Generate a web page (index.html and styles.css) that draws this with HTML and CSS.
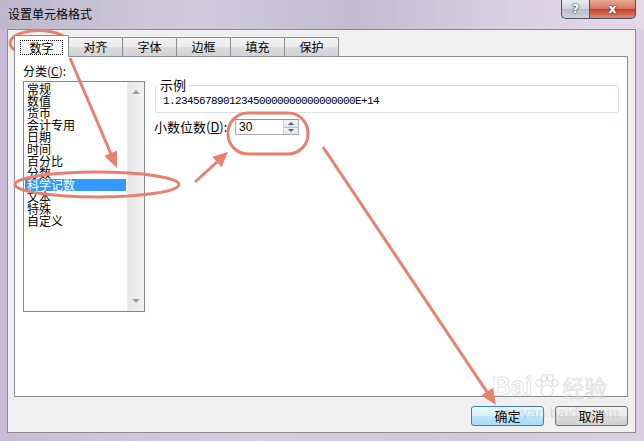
FILE: index.html
```html
<!DOCTYPE html>
<html lang="zh-CN">
  <head>
    <meta charset="UTF-8" />
    <title>设置单元格格式</title>
    <link rel="stylesheet" href="styles.css">
  </head>
  <body>
    <div class="window">
      <div class="titlebar">
        <span class="title">设置单元格格式</span>
        <div class="caption-buttons">
          <div class="cap-btn help">?</div>
          <div class="cap-btn close">x</div>
        </div>
      </div>

      <div class="client">
        <div class="tabs">
          <div class="tab active"><span class="focus">数字</span></div>
          <div class="tab">对齐</div>
          <div class="tab">字体</div>
          <div class="tab">边框</div>
          <div class="tab">填充</div>
          <div class="tab">保护</div>
        </div>

        <div class="panel">
          <div class="category">
            <div class="label">分类(<u>C</u>):</div>
            <div class="listbox">
              <ul class="items">
                <li>常规</li>
                <li>数值</li>
                <li>货币</li>
                <li>会计专用</li>
                <li>日期</li>
                <li>时间</li>
                <li>百分比</li>
                <li>分数</li>
                <li class="selected">科学记数</li>
                <li>文本</li>
                <li>特殊</li>
                <li>自定义</li>
              </ul>
              <div class="scrollbar">
                <span class="arrow up"></span>
                <span class="arrow down"></span>
              </div>
            </div>
          </div>

          <div class="detail">
            <fieldset class="sample">
              <legend>示例</legend>
              <div class="sample-value">1.234567890123450000000000000000E+14</div>
            </fieldset>
            <div class="decimals">
              <span class="label">小数位数(<u>D</u>):</span>
              <div class="spinbox">
                <span class="spin-value">30</span>
                <div class="spin-buttons">
                  <span class="spin up"></span>
                  <span class="spin down"></span>
                </div>
              </div>
            </div>
          </div>
        </div>

        <div class="actions">
          <div class="button primary">确定</div>
          <div class="button">取消</div>
        </div>
      </div>

      <div class="watermark">
        <div class="wm-logo">
          <span class="wm-bai">Bai</span>
          <svg class="wm-paw" width="26" height="24" viewBox="0 0 26 24">
            <ellipse cx="5" cy="9" rx="3" ry="3.5" />
            <ellipse cx="10" cy="4" rx="3" ry="3.5" />
            <ellipse cx="16" cy="4" rx="3" ry="3.5" />
            <ellipse cx="21" cy="9" rx="3" ry="3.5" />
            <path d="M13 11 C7 11 5 20 9 21 C11 22 15 22 17 21 C21 20 19 11 13 11 Z" />
          </svg>
          <span class="wm-cn">经验</span>
        </div>
        <div class="wm-url">jingyan.baidu.com</div>
      </div>

      <svg class="marks" width="644" height="441" viewBox="0 0 644 441">
        <ellipse cx="39" cy="43" rx="29" ry="12.5" />
        <ellipse cx="97" cy="184.5" rx="82" ry="12.5" />
        <rect x="228" y="113" width="80" height="41" rx="20" />
        <line x1="70" y1="58" x2="111" y2="154" />
        <polygon class="head" points="117,168 117.1,150.6 104.3,156.1" />
        <line x1="195" y1="182" x2="217" y2="162" />
        <polygon class="head" points="228,152 221.6,167.2 212.2,156.8" />
        <line x1="323" y1="147" x2="487" y2="392" />
        <polygon class="head" points="496,405 492.9,387.8 481.3,395.6" />
      </svg>
    </div>
  </body>
</html>
```

FILE: styles.css
```css
* {
  margin: 0;
  padding: 0;
  box-sizing: border-box;
}
body {
  width: 644px;
  height: 441px;
  overflow: hidden;
  font: 12px/14px "Noto Sans CJK SC", sans-serif;
  color: #000;
}
.window {
  position: relative;
  width: 644px;
  height: 441px;
  display: flex;
  flex-direction: column;
  background: linear-gradient(90deg, #c9bcd8 0, #d6cde2 40%, #d2c8de 70%, #dccfe2 100%);
}

/* title bar */
.titlebar {
  height: 29px;
  display: flex;
  align-items: flex-start;
  background: linear-gradient(90deg, #bdb8cc 0, #d2cbde 30%, #c2bcd2 55%, #d9d2e3 80%, #e2d8e8 100%);
}
.title {
  padding: 7px 0 0 8px;
  font-size: 12px;
}
.caption-buttons {
  display: flex;
  margin-left: auto;
  margin-right: 8px;
}
.cap-btn {
  height: 19px;
  border: 1px solid #4a5366;
  border-top: none;
  color: #fff;
  font: bold 13px/18px "DejaVu Sans", sans-serif;
  text-align: center;
  text-shadow: 0 0 2px #333, 0 0 1px #222;
}
.help {
  width: 28px;
  border-radius: 0 0 0 5px;
  border-right: none;
  background: linear-gradient(#e9ebf0, #cdd2dc 50%, #b3bac8 51%, #cfd4dd);
}
.close {
  width: 47px;
  border-radius: 0 0 5px 0;
  background: linear-gradient(#e8a898, #d8735f 50%, #c4412b 51%, #d98a72);
}

/* client area */
.client {
  flex: 1;
  display: flex;
  flex-direction: column;
  margin: 0 8px 8px 7px;
  padding: 0 7px 0 6px;
  background: #f0f0f0;
  border: 1px solid #8b8b8b;
}
.tabs {
  position: relative;
  z-index: 1;
  display: flex;
  align-items: flex-end;
  height: 26px;
}
.tab {
  width: 55px;
  height: 19px;
  margin-left: -1px;
  border: 1px solid #898c95;
  border-bottom: none;
  border-radius: 2px 2px 0 0;
  text-align: center;
  line-height: 17px;
  background: linear-gradient(#f3f3f3, #ebebeb 50%, #dcdcdc 51%, #d2d2d2);
}
.tab:first-child {
  margin-left: 0;
}
.tab.active {
  height: 22px;
  margin-bottom: -1px;
  padding-top: 3px;
  background: #fff;
}
.focus {
  display: inline-block;
  padding: 0 8px;
  line-height: 13px;
  outline: 1px dotted #000;
}

.panel {
  height: 341px;
  display: flex;
  gap: 10px;
  padding: 7px 8px 0 8px;
  background: #fff;
  border: 1px solid #898c95;
}
.category {
  width: 122px;
}
.label {
  white-space: nowrap;
}
.listbox {
  display: flex;
  height: 231px;
  margin-top: 3px;
  border: 1px solid #828790;
  background: #fff;
}
.items {
  flex: 1;
  list-style: none;
  padding: 1px;
}
.items li {
  height: 12px;
  padding-left: 2px;
  font-size: 12px;
  line-height: 12px;
  white-space: nowrap;
}
.items .selected {
  background: #3399ff;
  color: #fff;
}
.scrollbar {
  width: 17px;
  display: flex;
  flex-direction: column;
  justify-content: space-between;
  align-items: center;
  padding: 8px 0 8px;
  background: linear-gradient(90deg, #e6e6e6, #f2f2f2);
  border-left: 1px solid #ececec;
}
.arrow {
  width: 0;
  height: 0;
  border-left: 4px solid transparent;
  border-right: 4px solid transparent;
}
.arrow.up {
  border-bottom: 4px solid #a0a0a0;
}
.arrow.down {
  border-top: 4px solid #a0a0a0;
}

.detail {
  flex: 1;
  padding-top: 14px;
}
.sample {
  height: 35px;
  padding: 0 7px;
  border: 1px solid #d5dfe5;
  border-radius: 3px;
}
.sample legend {
  margin-left: -5px;
  padding: 0 2px;
  font-size: 13px;
  line-height: 14px;
}
.sample-value {
  margin-top: 2px;
  font: 11px/14px "Liberation Mono", monospace;
  letter-spacing: -0.6px;
  white-space: nowrap;
}
.decimals {
  display: flex;
  align-items: center;
  margin-top: 6px;
  margin-left: -1px;
}
.decimals .label {
  width: 81px;
  font-size: 13px;
}
.spinbox {
  display: flex;
  width: 64px;
  height: 16px;
  border: 1px solid #abadb3;
  border-top-color: #8f9197;
  background: #fff;
}
.spin-value {
  flex: 1;
  padding-left: 3px;
  font: 12px/14px "Liberation Sans", sans-serif;
}
.spin-buttons {
  width: 15px;
  display: flex;
  flex-direction: column;
  border-left: 1px solid #c9d3df;
}
.spin {
  flex: 1;
  display: flex;
  justify-content: center;
  align-items: center;
  background: linear-gradient(#f1f4f8, #dbe3ee);
}
.spin::after {
  content: "";
  border-left: 3px solid transparent;
  border-right: 3px solid transparent;
}
.spin.up::after {
  border-bottom: 3px solid #4f5b6c;
}
.spin.down {
  border-top: 1px solid #b8c3d2;
}
.spin.down::after {
  border-top: 3px solid #4f5b6c;
}

.actions {
  display: flex;
  justify-content: flex-end;
  gap: 11px;
  margin-top: 9px;
}
.button {
  width: 73px;
  height: 20px;
  border: 1px solid #707070;
  border-radius: 3px;
  text-align: center;
  line-height: 18px;
  font-size: 13px;
  background: linear-gradient(#f3f3f3, #ebebeb 50%, #dddddd 51%, #cfcfcf);
}
.button.primary {
  border-color: #3c7fb1;
  background: linear-gradient(#eaf6fd, #d9f0fc 50%, #bee6fd 51%, #a7d9f5);
}

/* watermark and annotations lie over the dialog */
.watermark {
  position: absolute;
  left: 492px;
  top: 371px;
  pointer-events: none;
}
.wm-logo {
  display: flex;
  align-items: center;
  gap: 2px;
}
.wm-bai {
  font: bold 26px/30px "Liberation Sans", sans-serif;
  color: rgba(255, 255, 255, 0.35);
  -webkit-text-stroke: 1px rgba(180, 180, 180, 0.4);
}
.wm-paw {
  fill: none;
  stroke: rgba(180, 180, 180, 0.45);
  stroke-width: 1.2;
}
.wm-cn {
  font-size: 22px;
  line-height: 30px;
  color: rgba(255, 255, 255, 0.35);
  -webkit-text-stroke: 1px rgba(180, 180, 180, 0.4);
}
.wm-url {
  margin-top: 4px;
  padding-left: 6px;
  font: 15px/16px "Liberation Sans", sans-serif;
  color: rgba(160, 160, 160, 0.3);
}
.marks {
  position: absolute;
  left: 0;
  top: 0;
  pointer-events: none;
}
.marks ellipse,
.marks rect,
.marks line {
  fill: none;
  stroke: #e8806f;
  stroke-width: 3;
}
.marks .head {
  fill: #e8806f;
}
```
